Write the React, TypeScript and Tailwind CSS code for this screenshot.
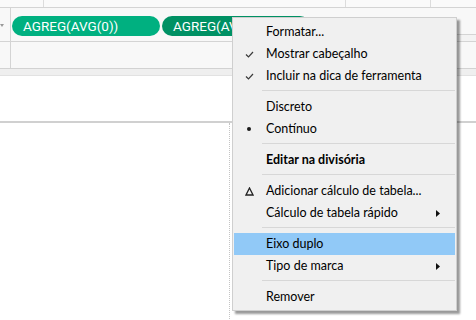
import React from "react";

type Item =
  | { kind: "sep" }
  | {
      kind: "item";
      label: string;
      mark?: "check" | "dot" | "delta";
      bold?: boolean;
      sub?: boolean;
      active?: boolean;
    };

const MENU: Item[] = [
  { kind: "item", label: "Formatar..." },
  { kind: "item", label: "Mostrar cabeçalho", mark: "check" },
  { kind: "item", label: "Incluir na dica de ferramenta", mark: "check" },
  { kind: "sep" },
  { kind: "item", label: "Discreto" },
  { kind: "item", label: "Contínuo", mark: "dot" },
  { kind: "sep" },
  { kind: "item", label: "Editar na divisória", bold: true },
  { kind: "sep" },
  { kind: "item", label: "Adicionar cálculo de tabela...", mark: "delta" },
  { kind: "item", label: "Cálculo de tabela rápido", sub: true },
  { kind: "sep" },
  { kind: "item", label: "Eixo duplo", active: true },
  { kind: "item", label: "Tipo de marca", sub: true },
  { kind: "sep" },
  { kind: "item", label: "Remover" },
];

function Mark({ mark }: { mark?: "check" | "dot" | "delta" }) {
  if (mark === "check")
    return (
      <svg width="9" height="7" viewBox="0 0 9 7">
        <path d="M1 3.5 L3.5 6 L8 1" fill="none" stroke="#3a3a3a" strokeWidth="1.2" />
      </svg>
    );
  if (mark === "dot") return <div className="w-[4px] h-[4px] rounded-full bg-[#1a1a1a]" />;
  if (mark === "delta")
    return (
      <svg width="9" height="9" viewBox="0 0 9 9">
        <path d="M4.5 1 L8 8 L1 8 Z" fill="none" stroke="#222" strokeWidth="1.3" />
      </svg>
    );
  return null;
}

function Pill({ dark }: { dark?: boolean }) {
  return (
    <div
      className={`h-[20px] w-[148px] shrink-0 rounded-full flex items-center pl-[11px] text-white text-[13.5px] font-['Roboto',Arial,sans-serif] ${
        dark ? "bg-[#009164]" : "bg-[#00b080]"
      }`}
    >
      AGREG(AVG(0))
    </div>
  );
}

function ContextMenu() {
  return (
    <div className="absolute left-[232px] top-[17px] w-[225px] bg-[#f0f0f0] border border-[#cfcfcf] px-[1px] pt-[3px] pb-[2px] shadow-[3px_3px_2px_rgba(0,0,0,0.4)] font-['Lato',sans-serif] text-[12.5px] text-black">
      {MENU.map((it, i) =>
        it.kind === "sep" ? (
          <div key={i} className="h-[9px] pt-[3px] pl-[28px] pr-0">
            <div className="h-[1px] bg-[#d7d7d7]" />
          </div>
        ) : (
          <div
            key={i}
            className={`h-[22px] flex items-center ${it.active ? "bg-[#91c9f7]" : ""}`}
          >
            <div className="w-[32px] shrink-0 flex items-center justify-center pr-[2px]">
              <Mark mark={it.mark} />
            </div>
            <div className={`flex-1 leading-none ${it.bold ? "font-bold" : ""}`}>{it.label}</div>
            {it.sub && (
              <svg width="4" height="7" viewBox="0 0 4 7" className="mr-[15px]">
                <path d="M0 0 L4 3.5 L0 7 Z" fill="#111" />
              </svg>
            )}
          </div>
        )
      )}
    </div>
  );
}

export default function App() {
  return (
    <div className="relative w-[476px] h-[320px] overflow-hidden bg-white">
      {/* top strip */}
      <div className="h-[8px] flex bg-[#fafafa] border-b border-[#d4d4d4]">
        <div className="w-[44px] border-r border-[#dcdcdc]" />
        <div className="w-[302px] border-r border-[#dcdcdc]" />
        <div className="w-[85px] border-r border-[#dcdcdc]" />
      </div>

      {/* pill shelf */}
      <div className="h-[34px] flex bg-[#f8f8f8] border-b border-[#d4d4d4]">
        <div className="w-[11px] shrink-0 border-r border-[#d4d4d4] flex items-center">
          <svg width="4" height="4" viewBox="0 0 4 4" className="mt-[2px]">
            <path d="M0 0 L4 0 L2 3 Z" fill="#9a9a9a" />
          </svg>
        </div>
        <div className="flex items-center gap-[2px] pl-[1px] pt-[3px]">
          <Pill />
          <Pill dark />
        </div>
        <div className="flex-1 flex flex-col justify-end">
          <div className="h-[7px] border-t border-[#d4d4d4] bg-[#f3f3f3]" />
        </div>
      </div>

      {/* second shelf row */}
      <div className="h-[27px] flex bg-[#f8f8f8] border-b border-[#d2d2d2]">
        <div className="w-[11px] border-r border-[#d4d4d4]" />
      </div>
      <div className="h-[7px] bg-[#efefef] border-b border-[#e2e2e2]" />

      {/* view area */}
      <div className="h-[47px] bg-white border-b-2 border-[#d0d0d0]" />
      <div className="flex h-[200px]">
        <div className="w-[230px] border-r border-dotted border-[#c4c4c4]" />
      </div>

      <ContextMenu />
    </div>
  );
}
